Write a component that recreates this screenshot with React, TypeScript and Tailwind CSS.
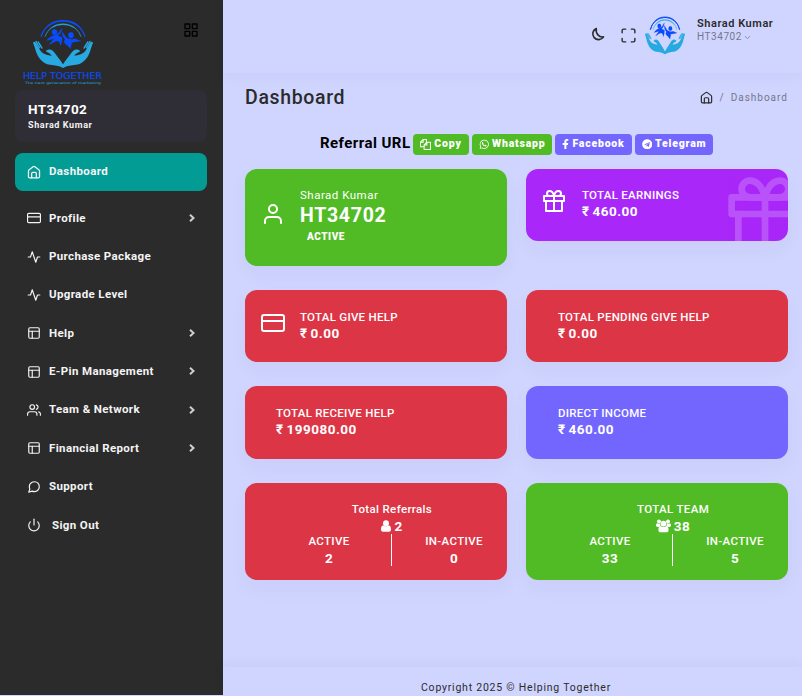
import type { ReactNode } from 'react';
import { FiActivity, FiChevronDown, FiCreditCard, FiGift, FiGrid, FiLayout, FiMaximize, FiMessageCircle, FiPower, FiUser, FiUsers } from 'react-icons/fi';
import { FaFacebookF, FaTelegram, FaWhatsapp } from 'react-icons/fa';

function HomeIcon({ className }: { className: string }) {
  return (
    <svg viewBox="0 0 24 24" fill="none" stroke="currentColor" strokeWidth="2.200" strokeLinecap="round" strokeLinejoin="round" className={className}>
      <path d="M2.500 10.500c0-1 .4-1.800 1.200-2.400L10.500 3c.9-.7 2.100-.7 3 0l6.800 5.100c.8.6 1.200 1.400 1.200 2.400V20c0 1.200-.8 2-2 2H4.500c-1.200 0-2-.8-2-2z" />
      <path d="M8 22v-7.500c0-1.200.8-2 2-2h4c1.200 0 2 .8 2 2V22" />
    </svg>
  );
}

function CopyIcon() {
  return (
    <svg viewBox="0 0 12 12" fill="none" stroke="currentColor" strokeWidth="1.100" strokeLinejoin="round" className="h-[11px] w-[11px]">
      <path d="M4.500 8.500h-4v-5l3-3h3.500v3M3.500.5v3h-3" />
      <path d="M7.500 3.500h4v8h-7v-5zM7.500 3.500v3h-3" />
    </svg>
  );
}

function PersonIcon() {
  return (
    <svg viewBox="0 0 10 12" fill="currentColor" className="h-[12px] w-[10px]">
      <circle cx="5" cy="3.200" r="3" />
      <path d="M2.300 5.200C.8 5.500 0 7 0 9.500C0 11 .9 11.700 2 11.700H8C9.100 11.700 10 11 10 9.500C10 7 9.200 5.500 7.700 5.200C6.500 6.700 3.500 6.700 2.300 5.200Z" />
    </svg>
  );
}

function PeopleIcon() {
  return (
    <svg viewBox="0 0 15 14" fill="currentColor" className="h-[14px] w-[15px]">
      <circle cx="3" cy="2.600" r="2" />
      <circle cx="12" cy="2.600" r="2" />
      <circle cx="7.500" cy="4.600" r="2.900" />
      <path d="M1.200 4.300C.3 4.500 0 5.500 0 6.600C0 7.500.6 8 1.500 8H3.200C4 7.200 4.800 7 4.300 5.500L4 4.500C3.200 5 2 5 1.200 4.300ZM13.800 4.300C14.700 4.500 15 5.500 15 6.600C15 7.500 14.400 8 13.500 8H11.800C11 7.200 10.200 7 10.700 5.500L11 4.500C11.800 5 13 5 13.800 4.300Z" />
      <path d="M4.700 7C3.200 7.200 2.400 8.700 2.400 11C2.400 12.500 3.300 13.300 4.500 13.300H10.500C11.700 13.300 12.600 12.500 12.600 11C12.600 8.700 11.800 7.200 10.300 7C9 8.300 6 8.300 4.700 7Z" />
    </svg>
  );
}

function Hand() {
  return (
    <g fill="#27a9e1">
      <path d="M30 48C26 46 22 45.500 17 45C9 44 4 37 2 29L0 23.500C1 22 3 23 3.600 25L7.500 31.500C11 35.500 15 35.500 18.500 36.500C17.500 33 13 33.500 13 31.500C17 28.500 20 31 22.500 34.500C25.500 38.500 28.500 41.500 30.500 45.500Z" />
      <path d="M3 22.500l3.500 6M5.200 23l3 5M7 25.500l2 3.500" stroke="#27a9e1" strokeWidth="1.300" strokeLinecap="round" />
    </g>
  );
}

function Emblem({ className }: { className: string }) {
  return (
    <svg viewBox="0 0 60 49" preserveAspectRatio="none" className={className}>
      <path d="M8 18A22.500 19 0 0 1 52 18C48 6 39 2.500 30 2.500C20 2.500 12 7 8 18Z" fill="#0a4bfa" stroke="#0a4bfa" strokeWidth="1.200" />
      <path d="M12 18A18.500 15 0 0 1 48 18C45 9 37 5.500 30 5.500C22 5.500 15 9.500 12 18Z" fill="#27a9e1" stroke="#27a9e1" strokeWidth=".4" />
      <g fill="#0a4bfa" stroke="#0a4bfa" strokeWidth=".3">
        <circle cx="21.500" cy="13.500" r="2.700" />
        <circle cx="38" cy="16.500" r="2.700" />
        <path d="M29 9.500C28.500 13 27.500 15 25 17L29 18.500C29.500 20.500 29 23.500 27.500 26.500C27 24 26.500 22.500 24.500 22C21 22 19.500 24.500 16 25.500L21 20L13.500 21.500C16.500 18.500 19 16.500 23 16C26 14.500 27 12 29 9.500Z" />
        <path d="M29 13L33 18.500C35 20 38 21 42 20L48 22L38.500 23.500C39 25.500 37.500 27.500 37.500 29.500C35.500 28 35 26 33 25.500L31 23L32 20.500C29.500 18 29 16 29 13Z" />
      </g>
      <Hand />
      <g transform="translate(60 0) scale(-1 1)"><Hand /></g>
    </svg>
  );
}

function CaretRight() {
  return (
    <svg viewBox="0 0 6 8" fill="none" stroke="currentColor" strokeWidth="2" className="mr-[12px] mb-px ml-auto h-[8px] w-[6px] text-[#cfcfcf]">
      <path d="M1 .8L4.500 4L1 7.200" />
    </svg>
  );
}

type NavEntry = { label: string; icon: ReactNode; caret?: boolean; indent?: boolean };
const iconClass = 'h-[14px] w-[14px]';
const nav: NavEntry[] = [
  { label: 'Profile', icon: <FiCreditCard className={iconClass} />, caret: true },
  { label: 'Purchase Package', icon: <FiActivity className={iconClass} /> },
  { label: 'Upgrade Level', icon: <FiActivity className={iconClass} /> },
  { label: 'Help', icon: <FiLayout className={iconClass} />, caret: true },
  { label: 'E-Pin Management', icon: <FiLayout className={iconClass} />, caret: true },
  { label: 'Team & Network', icon: <FiUsers className={iconClass} />, caret: true },
  { label: 'Financial Report', icon: <FiLayout className={iconClass} />, caret: true },
  { label: 'Support', icon: <FiMessageCircle className={iconClass} /> },
  { label: 'Sign Out', icon: <FiPower className={iconClass} />, indent: true },
];

function Sidebar() {
  return (
    <aside className="flex h-[695px] w-[223px] shrink-0 flex-col bg-[#2b2b2b] pr-[16px] pl-[15px] text-[#f4f4f4]">
      <div className="flex h-[90px] shrink-0 justify-between">
        <div className="flex w-[96px] flex-col items-center pt-[18px]">
          <Emblem className="h-[51px] w-[60px]" />
          <svg viewBox="0 0 80 16" className="mt-px h-[16px] w-[80px]">
            <text x="0" y="8.900" textLength="79" lengthAdjust="spacingAndGlyphs" fontSize="8.300" fill="#0a4bfa" stroke="#0a4bfa" strokeWidth=".15" className="font-['DejaVu_Sans']">HELP TOGETHER</text>
            <text x="2" y="13.900" textLength="76" lengthAdjust="spacingAndGlyphs" fontSize="3" fill="#27a9e1" className="font-['DejaVu_Sans']">The next generation of marketing</text>
          </svg>
        </div>
        <FiGrid className="mt-[22px] mr-[8px] h-[16px] w-[16px] text-black" />
      </div>
      <div className="h-[52px] shrink-0 rounded-lg bg-[#2f2d36] pt-[11px] pl-[13px]">
        <div className="text-[13.500px] leading-[17px] font-bold tracking-[0.400px] text-white">HT34702</div>
        <div className="text-[9px] leading-[14px] font-bold tracking-[0.600px]">Sharad Kumar</div>
      </div>
      <nav className="mt-[11px] flex flex-col text-[11.500px] font-bold tracking-[0.370px]">
        <div className="mb-[8px] flex h-[38px] items-center gap-[8px] rounded-lg bg-[#039c94] pb-px pl-[12px]">
          <HomeIcon className={iconClass} />
          <span>Dashboard</span>
        </div>
        {nav.map((item) => (
          <div key={item.label} className="flex h-[38.380px] items-center gap-[8px] pl-[12px]">
            {item.icon}
            <span className={item.indent ? 'pl-[3px]' : ''}>{item.label}</span>
            {item.caret && <CaretRight />}
          </div>
        ))}
      </nav>
    </aside>
  );
}

function Card({ className, children }: { className: string; children: ReactNode }) {
  return <section className={`flex overflow-hidden rounded-xl text-white shadow-[0_9px_20px_rgba(46,35,94,0.04)] ${className}`}>{children}</section>;
}

function Amount({ label, value }: { label: string; value: string }) {
  return (
    <div className="pt-[19px]">
      <div className="text-[11.500px] leading-[16px] font-medium tracking-[0.270px]">{label}</div>
      <div className="text-[13.500px] leading-[16px] font-bold tracking-[0.500px]"><span className="tracking-normal">₹ </span>{value}</div>
    </div>
  );
}

function CountCard({ title, total, icon, active, inactive, className }: { title: string; total: string; icon: ReactNode; active: string; inactive: string; className: string }) {
  return (
    <Card className={`h-[97px] flex-col pt-[18px] pl-[22px] text-[11.500px] font-medium ${className}`}>
      <div className="flex flex-col items-center pl-[10px]">
        <span className="leading-[17px] tracking-[0.350px]">{title}</span>
        <span className="flex h-[16px] items-center gap-[3px] text-[13.500px] font-bold tracking-[0.500px]">{icon}{total}</span>
      </div>
      <div className="flex h-[32px]">
        <div className="w-[124px] shrink-0 text-center">
          <div className="leading-[15px] tracking-[0.350px]">ACTIVE</div>
          <div className="text-[13.500px] leading-[18px] font-bold tracking-[0.500px]">{active}</div>
        </div>
        <div className="w-px shrink-0 bg-white" />
        <div className="w-[124px] shrink-0 text-center">
          <div className="leading-[15px] tracking-[0.350px]">IN-ACTIVE</div>
          <div className="text-[13.500px] leading-[18px] font-bold tracking-[0.500px]">{inactive}</div>
        </div>
      </div>
    </Card>
  );
}

const button = 'flex h-[21px] items-center justify-center gap-[3px] rounded-[4px] pb-px text-[10.500px] font-black tracking-[0.800px] text-white';

export default function App() {
  return (
    <div className="flex h-[696px] w-[802px] overflow-hidden bg-[#d0d5ff] font-[Roboto,sans-serif] whitespace-nowrap">
      <Sidebar />
      <div className="flex flex-1 flex-col">
        <header className="flex h-[73px] shrink-0 justify-end text-[#2b2b2b] shadow-[0_4px_12px_rgba(46,35,94,0.04)]">
          <svg viewBox="0 0 24 24" fill="none" stroke="currentColor" strokeWidth="2.800" strokeLinejoin="round" className="mt-[27px] h-[14px] w-[14px]">
            <path d="M9 2.500A10 10 0 1 0 21.500 17C14 18.500 7.500 11 9 2.500Z" />
          </svg>
          <FiMaximize className="mt-[27px] ml-[15px] h-[17px] w-[17px]" />
          <Emblem className="mt-[15px] ml-[8px] h-[40px] w-[40px]" />
          <div className="mt-[15px] ml-[12px] w-[105px]">
            <div className="text-[11px] leading-[17px] font-semibold tracking-[0.550px]">Sharad Kumar</div>
            <div className="flex items-center gap-px text-[10px] leading-[10px] tracking-[0.550px] text-[#74768b]">HT34702 <FiChevronDown className="h-[9px] w-[9px]" /></div>
          </div>
        </header>
        <main className="flex-1 pr-[14px] pl-[22px]">
          <div className="flex h-[49px] items-center justify-between">
            <h1 className="pt-px text-[19.500px] font-medium tracking-[0.650px] text-[#2b2b2b]">Dashboard</h1>
            <div className="flex items-center text-[10px] tracking-[1px] text-[#74768b]">
              <HomeIcon className="h-[13px] w-[13px] text-[#2b2b2b]" />
              <span className="mx-[6px]">/</span>
              <span>Dashboard</span>
            </div>
          </div>
          <div className="mt-[12px] mb-[14px] flex h-[21px] items-center gap-[3px] pl-[75px]">
            <span className="w-[90px] pb-[2px] text-[15px] font-bold tracking-[0.450px] text-black">Referral URL</span>
            <span className={`w-[56px] bg-[#51bb25] ${button}`}><CopyIcon />Copy</span>
            <span className={`w-[80px] bg-[#51bb25] ${button}`}><FaWhatsapp />Whatsapp</span>
            <span className={`w-[77px] bg-[#7366ff] ${button}`}><FaFacebookF className="w-[7px]" />Facebook</span>
            <span className={`w-[78px] bg-[#7366ff] ${button}`}><FaTelegram />Telegram</span>
          </div>
          <div className="grid grid-cols-[262px_262px] items-start gap-x-[19px] gap-y-[24px]">
            <Card className="h-[97px] bg-[#51bb25] pl-[16px]">
              <FiUser className="mt-[33px] h-[24px] w-[24px]" />
              <div className="pt-[18px] pl-[15px]">
                <div className="text-[11.500px] leading-[17px] tracking-[0.500px]">Sharad Kumar</div>
                <div className="text-[19.500px] leading-[23px] font-bold tracking-[0.700px]">HT34702</div>
                <div className="pl-[7px] text-[10px] leading-[20px] font-black tracking-[0.550px]">ACTIVE</div>
              </div>
            </Card>
            <Card className="relative h-[72px] bg-[#a927f9] pl-[16px]">
              <FiGift className="mt-[20px] h-[24px] w-[24px]" />
              <div className="-mt-px pl-[16px]"><Amount label="TOTAL EARNINGS" value="460.00" /></div>
              <FiGift className="absolute top-[5px] left-[199px] h-[80px] w-[80px] opacity-20" />
            </Card>
            <Card className="h-[72px] bg-[#dc3545] pl-[16px]">
              <FiCreditCard className="mt-[21px] h-[24px] w-[24px]" />
              <div className="pl-[15px]"><Amount label="TOTAL GIVE HELP" value="0.00" /></div>
            </Card>
            <Card className="h-[72px] bg-[#dc3545] pl-[32px]"><Amount label="TOTAL PENDING GIVE HELP" value="0.00" /></Card>
            <Card className="h-[73px] bg-[#dc3545] pl-[31px]"><Amount label="TOTAL RECEIVE HELP" value="199080.00" /></Card>
            <Card className="h-[73px] bg-[#7366ff] pl-[32px]"><Amount label="DIRECT INCOME" value="460.00" /></Card>
            <CountCard className="bg-[#dc3545]" title="Total Referrals" total="2" icon={<PersonIcon />} active="2" inactive="0" />
            <CountCard className="bg-[#51bb25]" title="TOTAL TEAM" total="38" icon={<PeopleIcon />} active="33" inactive="5" />
          </div>
        </main>
        <footer className="flex h-[29px] shrink-0 justify-center pt-[13px] pl-[7px] text-[10.500px] leading-[16px] tracking-[0.780px] text-[#2b2b2b] shadow-[0_-4px_12px_rgba(46,35,94,0.04)]">
          Copyright 2025 © Helping Together
        </footer>
      </div>
    </div>
  );
}
